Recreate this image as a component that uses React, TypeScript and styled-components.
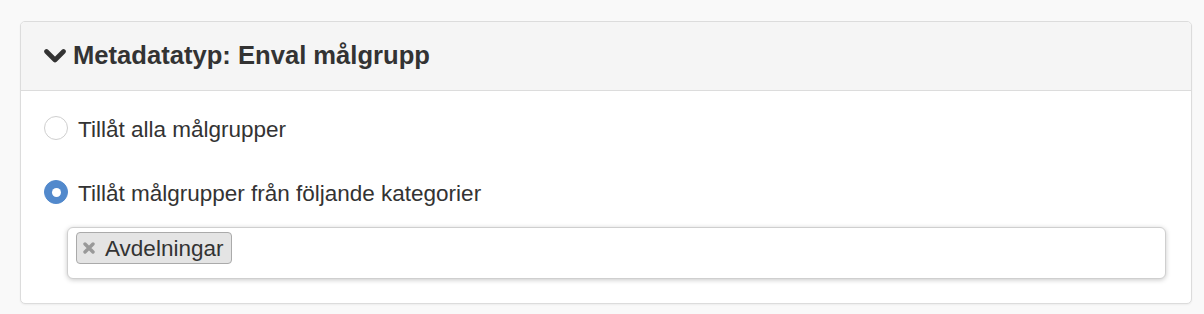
import React, { useState } from 'react';
import styled, { createGlobalStyle } from 'styled-components';

const GlobalStyle = createGlobalStyle`
    html, body {
        margin: 0;
        padding: 0;
        background: #f9f9f9;
        font-family: "Liberation Sans", Arial, Helvetica, sans-serif;
        color: #333;
    }
`;

const Page = styled.div`
    padding: 21px 12px 9px 20px;
`;

const Panel = styled.section`
    background: #fff;
    border: 1px solid #dcdcdc;
    border-radius: 5px;
    box-shadow: 0 1px 2px rgba(0, 0, 0, 0.05);
    overflow: hidden;
`;

const Header = styled.header`
    display: flex;
    align-items: center;
    gap: 7px;
    height: 69px;
    padding-left: 23px;
    box-sizing: border-box;
    background: #f5f5f5;
    border-bottom: 1px solid #dcdcdc;
`;

const Title = styled.h3`
    margin: 0;
    font-size: 25.6px;
    font-weight: bold;
    color: #333;
    line-height: 1;
`;

const Body = styled.div`
    display: flex;
    flex-direction: column;
    padding: 25px 25px 24px 23px;
`;

const Option = styled.label<{ $spaced?: boolean }>`
    display: flex;
    align-items: center;
    gap: 10px;
    height: 24px;
    font-size: 22.5px;
    color: #333;
    cursor: pointer;
    margin-bottom: ${p => (p.$spaced ? '40px' : '0')};
`;

const OptionText = styled.span`
    padding-top: 3px;
`;

const Radio = styled.span<{ $checked: boolean }>`
    width: 24px;
    height: 24px;
    border-radius: 50%;
    box-sizing: border-box;
    flex-shrink: 0;
    display: flex;
    align-items: center;
    justify-content: center;
    background: ${p => (p.$checked ? '#5289cc' : '#fff')};
    border: 1px solid ${p => (p.$checked ? '#5289cc' : '#cfcfcf')};

    &::after {
        content: '';
        display: ${p => (p.$checked ? 'block' : 'none')};
        width: 9px;
        height: 9px;
        border-radius: 50%;
        background: #fff;
    }
`;

const TagInput = styled.div`
    margin: 23px 0 0 23px;
    height: 52px;
    box-sizing: border-box;
    display: flex;
    align-items: flex-start;
    padding: 4px 8px;
    border: 1px solid #cfcfcf;
    border-radius: 6px;
    background: #fff;
    box-shadow: 0 1px 5px rgba(0, 0, 0, 0.22);
`;

const Tag = styled.span`
    display: inline-flex;
    align-items: center;
    gap: 10px;
    height: 32px;
    box-sizing: border-box;
    padding: 2px 8px 0 6px;
    background: #e4e4e4;
    border: 1px solid #aaa;
    border-radius: 4px;
    font-size: 22.5px;
    color: #333;
`;

const Remove = styled.span`
    display: inline-flex;
    margin-top: -2px;
    cursor: pointer;
`;

const Chevron = () => (
    <svg width="22" height="15" viewBox="0 0 22 15">
        <path d="M2.5 2.5 L11 11 L19.5 2.5" fill="none" stroke="#333" strokeWidth="4.6" strokeLinecap="round" strokeLinejoin="round" />
    </svg>
);

const Cross = () => (
    <svg width="12" height="12" viewBox="0 0 12 12">
        <path d="M2 2 L10 10 M10 2 L2 10" stroke="#999" strokeWidth="3.4" strokeLinecap="round" />
    </svg>
);

const App: React.FC = () => {
    const [choice, setChoice] = useState<'all' | 'categories'>('categories');

    return (
        <Page>
            <GlobalStyle />
            <Panel>
                <Header>
                    <Chevron />
                    <Title>Metadatatyp: Enval målgrupp</Title>
                </Header>
                <Body>
                    <Option $spaced onClick={() => setChoice('all')}>
                        <Radio $checked={choice === 'all'} />
                        <OptionText>Tillåt alla målgrupper</OptionText>
                    </Option>
                    <Option onClick={() => setChoice('categories')}>
                        <Radio $checked={choice === 'categories'} />
                        <OptionText>Tillåt målgrupper från följande kategorier</OptionText>
                    </Option>
                    <TagInput>
                        <Tag>
                            <Remove><Cross /></Remove>
                            Avdelningar
                        </Tag>
                    </TagInput>
                </Body>
            </Panel>
        </Page>
    );
};

export default App;
